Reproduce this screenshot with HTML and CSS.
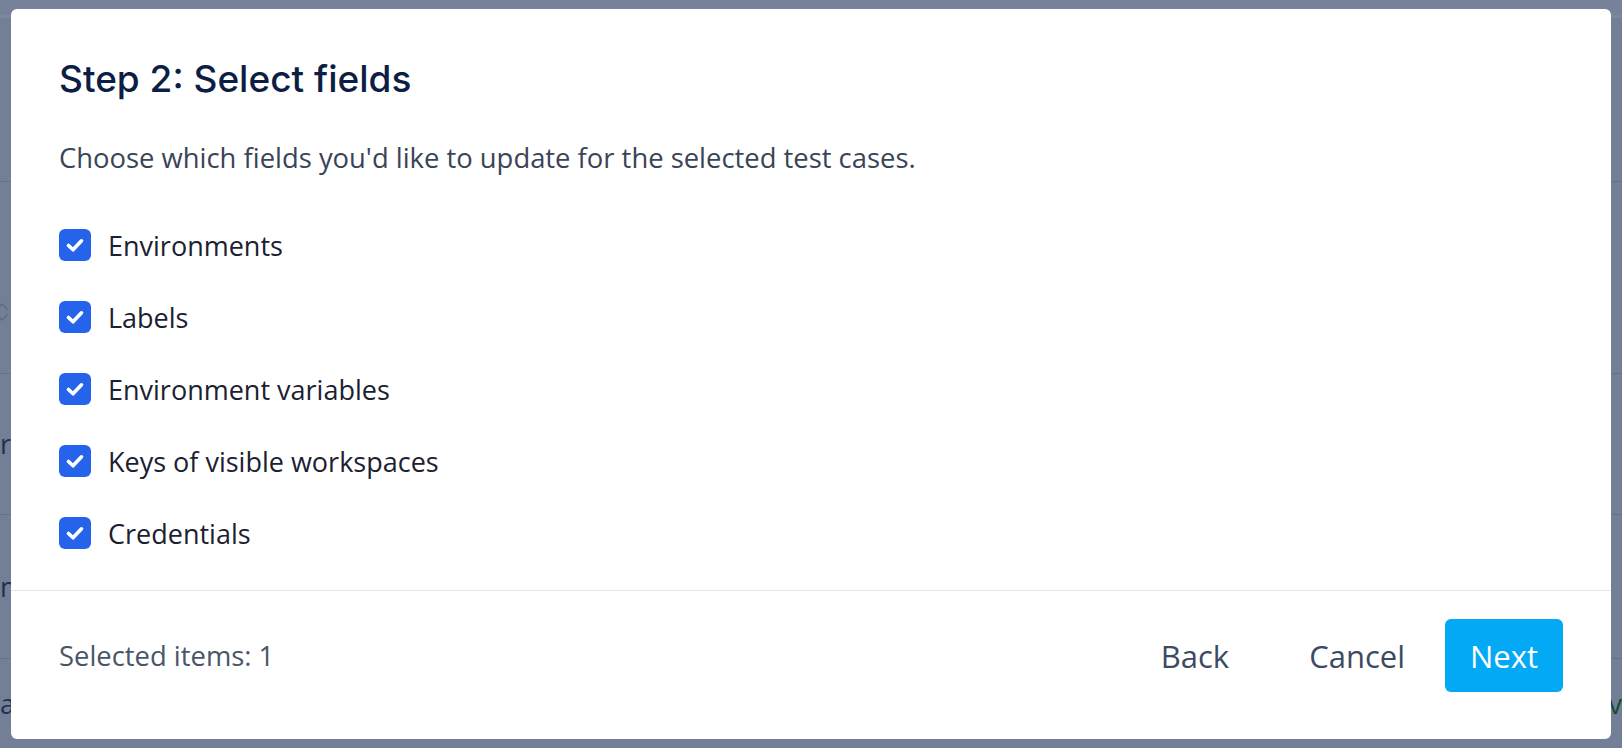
FILE: index.html
```html
<!DOCTYPE html>
<html lang="en">
<head>
<meta charset="utf-8">
<title>Step 2: Select fields</title>
<link rel="stylesheet" href="styles.css">
</head>
<body>
<div class="page">
  <div class="page-top"></div>
  <div class="page-row r1"></div>
  <div class="page-row r2"><svg class="sort" viewBox="0 0 12 20" width="12" height="20"><path d="M1 7l5-5 5 5M1 13l5 5 5-5" fill="none" stroke="#5f6b82" stroke-width="1.6" stroke-linecap="round" stroke-linejoin="round"/></svg></div>
  <div class="page-row r3"><span class="cut">r</span></div>
  <div class="page-row r4"><span class="cut">m</span></div>
  <div class="page-row r5"><span class="cut">a</span><span class="cut-right">v</span></div>
</div>
<div class="overlay">
  <div class="modal" role="dialog" aria-labelledby="title">
    <div class="modal-body">
      <h2 class="title" id="title">Step 2: Select fields</h2>
      <p class="subtitle">Choose which fields you'd like to update for the selected test cases.</p>
      <ul class="fields">
        <li class="field"><span class="box"><svg viewBox="0 0 32 32" width="32" height="32"><path d="M9.5 16.5l4.5 4.3 8.5-9" fill="none" stroke="#fff" stroke-width="3.6" stroke-linecap="round" stroke-linejoin="round"/></svg></span><span class="label">Environments</span></li>
        <li class="field"><span class="box"><svg viewBox="0 0 32 32" width="32" height="32"><path d="M9.5 16.5l4.5 4.3 8.5-9" fill="none" stroke="#fff" stroke-width="3.6" stroke-linecap="round" stroke-linejoin="round"/></svg></span><span class="label">Labels</span></li>
        <li class="field"><span class="box"><svg viewBox="0 0 32 32" width="32" height="32"><path d="M9.5 16.5l4.5 4.3 8.5-9" fill="none" stroke="#fff" stroke-width="3.6" stroke-linecap="round" stroke-linejoin="round"/></svg></span><span class="label">Environment variables</span></li>
        <li class="field"><span class="box"><svg viewBox="0 0 32 32" width="32" height="32"><path d="M9.5 16.5l4.5 4.3 8.5-9" fill="none" stroke="#fff" stroke-width="3.6" stroke-linecap="round" stroke-linejoin="round"/></svg></span><span class="label">Keys of visible workspaces</span></li>
        <li class="field"><span class="box"><svg viewBox="0 0 32 32" width="32" height="32"><path d="M9.5 16.5l4.5 4.3 8.5-9" fill="none" stroke="#fff" stroke-width="3.6" stroke-linecap="round" stroke-linejoin="round"/></svg></span><span class="label">Credentials</span></li>
      </ul>
    </div>
    <div class="modal-footer">
      <span class="count">Selected items: 1</span>
      <div class="actions">
        <button class="btn btn-text" type="button">Back</button>
        <button class="btn btn-text" type="button">Cancel</button>
        <button class="btn btn-primary" type="button">Next</button>
      </div>
    </div>
  </div>
</div>
</body>
</html>
```
FILE: styles.css
```css
* { box-sizing: border-box; }
html, body { margin: 0; padding: 0; }
body {
  width: 1622px;
  height: 748px;
  overflow: hidden;
  background: #737f96;
  font-family: "Open Sans", "Noto Sans", sans-serif;
  position: relative;
}

/* background page (dimmed under overlay) */
.page {
  display: flex;
  flex-direction: column;
  height: 100%;
  background: #737f96;
}
.page-top {
  height: 18px;
  background: #76829a;
  border-bottom: 3px solid #7b879d;
}
.page-row {
  border-bottom: 1px solid #66728a;
  position: relative;
  display: flex;
  align-items: center;
}
.r1 { height: 164px; }
.r2 { height: 192px; }
.r3 { height: 141px; }
.r4 { height: 144px; }
.r5 { flex: 1; border-bottom: 0; }
.cut {
  font-size: 27px;
  line-height: 32px;
  color: #23304f;
  margin-left: 0;
}
.cut-right {
  margin-left: auto;
  margin-right: 0;
  font-size: 27px;
  line-height: 32px;
  color: #144a3a;
}
.sort {
  margin-left: -4px;
  margin-top: 68px;
}

.overlay {
  position: absolute;
  inset: 0;
  display: flex;
  align-items: center;
  justify-content: center;
}
.modal {
  width: 1600px;
  height: 730px;
  background: #fff;
  border-radius: 6px;
  display: flex;
  flex-direction: column;
}
.modal-body {
  padding: 48px 48px 0;
  flex: 1;
}
.title {
  margin: 0;
  font-family: Inter, "Noto Sans", sans-serif;
  font-weight: 500;
  font-size: 37px;
  line-height: 44px;
  color: #0d1e45;
}
.subtitle {
  margin: 40px 0 0;
  font-size: 27.4px;
  line-height: 34px;
  color: #3a4457;
}
.fields {
  list-style: none;
  margin: 54px 0 0;
  padding: 0;
  display: flex;
  flex-direction: column;
  gap: 40px;
}
.field {
  display: flex;
  align-items: center;
  height: 32px;
}
.box {
  width: 32px;
  height: 32px;
  border-radius: 6px;
  background: #2563eb;
  display: flex;
  flex-shrink: 0;
}
.label {
  margin-left: 17px;
  font-size: 27px;
  color: #1b2130;
}
.modal-footer {
  border-top: 1px solid #e6e7ec;
  padding: 28px 48px 47px;
  display: flex;
  align-items: center;
  justify-content: space-between;
}
.count {
  font-size: 27.4px;
  color: #4a5568;
}
.actions {
  display: flex;
  align-items: center;
}
.btn {
  font-family: "Open Sans", "Noto Sans", sans-serif;
  font-size: 31px;
  border: 0;
  background: none;
  height: 73px;
  border-radius: 6px;
  cursor: pointer;
}
.btn-text {
  color: #3d4a63;
  padding: 0 40px;
}
.btn-primary {
  background: #03a9f4;
  color: #fff;
  width: 118px;
  padding: 0;
}
```
